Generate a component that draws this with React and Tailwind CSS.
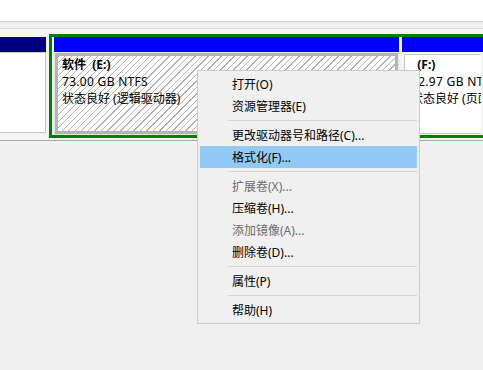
import React from 'react';

const FONT = { fontFamily: '"Noto Sans", "Noto Sans CJK SC", sans-serif' };

const MENU = [
  { label: '打开(O)' },
  { label: '资源管理器(E)' },
  { sep: true },
  { label: '更改驱动器号和路径(C)...' },
  { label: '格式化(F)...', active: true },
  { sep: true },
  { label: '扩展卷(X)...', disabled: true },
  { label: '压缩卷(H)...' },
  { label: '添加镜像(A)...', disabled: true },
  { label: '删除卷(D)...' },
  { sep: true },
  { label: '属性(P)' },
  { sep: true },
  { label: '帮助(H)' },
];

function ContextMenu() {
  return (
    <div className="absolute left-[197px] top-[70px] w-[223px] h-[254px] box-border border border-[#cccccc] bg-[#f0f0f0] px-[2px] pt-[2px] pb-[1px] text-[12px]">
      {MENU.map((item, i) =>
        item.sep ? (
          <div key={i} className="h-[7px] flex items-center">
            <div className="ml-[28px] h-px w-full bg-[#d5d5d5]" />
          </div>
        ) : (
          <div
            key={i}
            className={`h-[22px] flex items-center pl-[32px] whitespace-nowrap ${item.active ? 'bg-[#91c9f7]' : ''} ${item.disabled ? 'text-[#6d6d6d]' : 'text-black'}`}
          >
            {item.label}
          </div>
        )
      )}
    </div>
  );
}

export default function App() {
  return (
    <div className="relative w-[483px] h-[370px] overflow-hidden bg-[#f0f0f0] text-[12px] leading-[17px] text-black" style={FONT}>
      {/* top strip */}
      <div className="h-[21px] bg-white" />
      <div className="h-px bg-[#cfcfcf]" />
      <div className="h-[6px] bg-[#f0f0f0]" />
      <div className="h-px bg-[#d9d9d9]" />

      {/* disk row */}
      <div className="h-[111px] flex pt-[5px] bg-[#f4f4f4]">
        {/* primary partition */}
        <div className="w-[46px] shrink-0 mt-[3px] flex flex-col">
          <div className="h-[15px] bg-[#000080]" />
          <div className="h-[81px] bg-white border-t border-r border-b border-[#c8c8c8]" />
        </div>

        {/* extended partition */}
        <div className="ml-[3px] flex-1 h-[104px] border-[3px] border-r-0 border-[#008000] flex pl-[2px] overflow-hidden">
          {/* E: selected */}
          <div className="w-[345px] shrink-0 flex flex-col">
            <div className="h-[15px] bg-[#0000ff]" />
            <div className="h-[83px] p-[1px] bg-[#e6e6e6]">
              <div className="h-full border-[3px] border-[#b4b4b4] pl-[4px] whitespace-nowrap bg-[repeating-linear-gradient(135deg,#b0b0b0_0px,#b0b0b0_1px,#ffffff_1px,#ffffff_4.6px)]">
                <div className="font-bold">软件&nbsp;&nbsp;(E:)</div>
                <div className="tracking-[0.3px]">73.00 GB NTFS</div>
                <div>状态良好 (逻辑驱动器)</div>
              </div>
            </div>
          </div>

          {/* F: */}
          <div className="ml-[3px] flex-1 flex flex-col min-w-0">
            <div className="h-[15px] bg-[#0000ff]" />
            <div className="h-[83px] p-[2px] pb-[1px]">
              <div className="h-full border border-r-0 border-[#c8c8c8] bg-white pl-[6px] pt-[1px] whitespace-nowrap overflow-hidden">
                <div className="font-bold whitespace-pre">  (F:)</div>
                <div className="tracking-[0.3px]">12.97 GB NTFS</div>
                <div>状态良好 (页面文件, 逻辑驱动器)</div>
              </div>
            </div>
          </div>
        </div>
      </div>

      <div className="h-px bg-[#a9a9a9]" />

      <ContextMenu />
    </div>
  );
}
